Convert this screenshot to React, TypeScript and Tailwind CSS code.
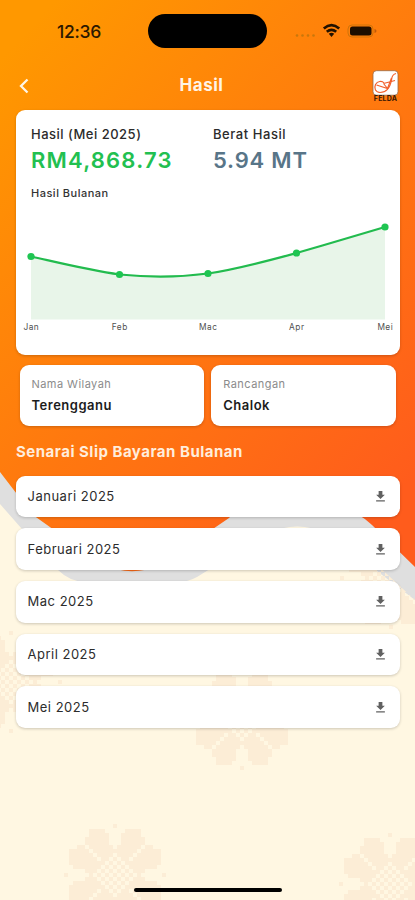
import { MdDownload } from "react-icons/md";

const slips = ["Januari 2025", "Februari 2025", "Mac 2025", "April 2025", "Mei 2025"];

const points = [
  { label: "Jan", x: 31, y: 256.5 },
  { label: "Feb", x: 119.5, y: 274.5 },
  { label: "Mac", x: 208, y: 273.5 },
  { label: "Apr", x: 296.5, y: 253 },
  { label: "Mei", x: 385, y: 227 },
];

const flowers = [
  [11, 682],
  [391, 578],
  [242, 719],
  [115, 875],
  [390, 884],
];

const CURVE =
  "M31 256.5C60 263 90 270.500 119.500 274.500C149 277.500 178.500 277.500 208 273.500C238 269 267 261 296.500 253C326 244.500 355 236 385 227";

// pixel flower on a 4 unit grid, mirrored over both axes
function buildFlower() {
  const cells: string[] = [];
  for (let i = -11; i <= 11; i++) {
    for (let j = -11; j <= 11; j++) {
      const m = Math.max(Math.abs(i), Math.abs(j));
      const n = Math.min(Math.abs(i), Math.abs(j));
      const petal = Math.hypot(m * 4 - 35, n * 4 - 17) < 11.5;
      const inner = m < 8 && m + n >= 6 && m - n >= 1 && n >= 1;
      const center = m + n < 8 && m < 7 && (i + j) % 2 === 0;
      if (petal || inner || center) {
        cells.push(`M${i * 4 - 2} ${j * 4 - 2}h4v4h-4z`);
      }
    }
  }
  for (const [x, y] of [[0, -49], [0, 49], [-49, 0], [49, 0]]) {
    cells.push(`M${x - 2} ${y - 2}h4v4h-4z`);
  }
  return cells.join("");
}

const FLOWER = buildFlower();

function Background() {
  return (
    <svg className="absolute inset-0 h-full w-full" viewBox="0 0 415 900">
      <defs>
        <linearGradient id="sky" gradientUnits="userSpaceOnUse" x1="0" y1="60" x2="430" y2="460">
          <stop offset="0" stopColor="#ff9800" />
          <stop offset="1" stopColor="#ff5c1c" />
        </linearGradient>
      </defs>
      <rect width="415" height="900" fill="#fff7e2" />
      <path d="M0 470V504L58 570Q70 582 86 582H178Q188 582 197 577L268 533Q297 520 327 533L415 600V460Z" fill="#dfdfdf" />
      {flowers.map(([x, y]) => (
        <path key={`${x}-${y}`} d={FLOWER} transform={`translate(${x} ${y})`} fill="#fcedd6" shapeRendering="crispEdges" />
      ))}
      {/* right hand band covers the flower behind it */}
      <path d="M363 518V552L415 600V520Z" fill="#dfdfdf" />
      <path d="M0 0H415V567L372 525Q355 509 335 507H252Q238 508 229 518L160 565Q131 578 102 564L33 515L0 472Z" fill="url(#sky)" />
    </svg>
  );
}

function StatusBar() {
  return (
    <div className="flex h-[62px] items-center">
      <div className="w-[148px] pt-px pl-[57px] text-[17.5px] leading-none font-medium tracking-[-0.3px] text-[#2b1800]">12:36</div>
      <div className="h-[34px] w-[119px] rounded-full bg-black" />
      <svg className="ml-[26px]" width="86" height="20" viewBox="0 0 86 20">
        <g fill="#c8770c">
          <circle cx="4" cy="14.500" r="1.300" />
          <circle cx="9.500" cy="14.500" r="1.300" />
          <circle cx="15" cy="14.500" r="1.300" />
          <circle cx="20.500" cy="14.500" r="1.300" />
        </g>
        <g fill="none" stroke="#221200" strokeWidth="2.600">
          <path d="M30.800 7.500Q38.500 0.800 46.200 7.500" />
          <path d="M33.800 10.800Q38.500 6.800 43.200 10.800" />
        </g>
        <path d="M35.800 12.800Q38.500 10.800 41.200 12.800L38.500 16Z" fill="#221200" />
        <rect x="55" y="4" width="25" height="12" rx="4" fill="none" stroke="#cf7408" />
        <rect x="57" y="5.500" width="21.500" height="9" rx="2.500" fill="#1c0e00" />
        <path d="M81.500 8v4q2-.5 2-2t-2-2" fill="#bf5a08" />
      </svg>
    </div>
  );
}

function Logo() {
  return (
    <div className="flex w-[27px] flex-col items-center">
      <svg width="27" height="26" viewBox="0 0 27 26">
        <rect x="1" y="0.700" width="25" height="24.500" rx="3.500" fill="#fff" stroke="#9b6a48" strokeWidth="0.800" />
        <g fill="none" stroke="#f2602c" strokeWidth="1.200">
          <path d="M24 3.500C20 4.500 20 7 19.500 10C18 18 14 22.500 8 22.500C3 22 2 18 3.500 14.500C5.500 11 10 10.500 12 13" />
          <path d="M4.500 15L15.500 18.500L19.500 8M11.500 13.500L23 10.500M11.500 13.500L15.500 18.500" />
        </g>
      </svg>
      <span className="text-[7px] leading-[6px] font-bold tracking-[0.2px] text-[#3a1804]">FELDA</span>
    </div>
  );
}

function Chart() {
  return (
    <svg className="block" width="384" height="150" viewBox="16 205 384 150">
      <path d={`${CURVE}V319.500H31Z`} fill="#e8f5e9" />
      <path d={CURVE} fill="none" stroke="#22bb4e" strokeWidth="2.200" />
      {points.map((p) => (
        <g key={p.label}>
          <circle cx={p.x} cy={p.y} r="3.600" fill="#1fc552" />
          <text x={p.x + 0.3} y="330" textAnchor="middle" fontSize="8.300" letterSpacing="0.5" fill="#505050">
            {p.label}
          </text>
        </g>
      ))}
    </svg>
  );
}

function InfoCard({ label, value }: { label: string; value: string }) {
  return (
    <div className="h-[61.5px] flex-1 rounded-[9px] bg-white px-3 pt-3 shadow-[0_1px_3px_rgba(0,0,0,0.2)]">
      <div className="text-[11px] leading-[14px] tracking-[0.45px] text-[#8b8b8b]">{label}</div>
      <div className="mt-[7px] text-[13px] leading-[14px] font-semibold tracking-[0.5px] text-[#1c1c1c]">{value}</div>
    </div>
  );
}

export default function App() {
  return (
    <div className="relative h-[900px] w-[415px] overflow-hidden font-['Inter',sans-serif]">
      <Background />
      <div className="relative flex h-full flex-col">
        <StatusBar />

        {/* Header */}
        <div className="flex h-[48px] items-center justify-between pr-4 pl-[18px]">
          <svg width="12" height="16" viewBox="0 0 12 16" fill="none" stroke="#fff6e8" strokeWidth="2.300">
            <path d="M9.500 1.500L3 8L9.500 14.500" />
          </svg>
          <h1 className="pl-px text-[17px] font-bold tracking-[0.5px] text-[#fff4e6]">Hasil</h1>
          <Logo />
        </div>

        {/* Yield summary */}
        <div className="mr-[15px] ml-4 h-[245px] rounded-[9px] bg-white shadow-[0_1px_3px_rgba(0,0,0,0.2)]">
          <div className="flex h-[95px] pt-4 pl-[15px]">
            <div className="w-[182px]">
              <div className="text-[13px] leading-4 font-medium tracking-[0.5px] text-[#2b2b2b]">Hasil (Mei 2025)</div>
              <div className="pt-px text-[22px] leading-[35px] font-semibold tracking-[1.2px] text-[#22c050]">RM4,868.73</div>
              <div className="mt-px text-[11px] leading-[28px] font-medium tracking-[0.5px] text-[#333]">Hasil Bulanan</div>
            </div>
            <div>
              <div className="text-[13px] leading-4 font-medium tracking-[0.55px] text-[#2b2b2b]">Berat Hasil</div>
              <div className="pt-px text-[22px] leading-[35px] font-semibold tracking-[0.8px] text-[#587588]">5.94 MT</div>
            </div>
          </div>
          <Chart />
        </div>

        <div className="mr-[19px] ml-[19.5px] mt-[9.5px] flex gap-[7px]">
          <InfoCard label="Nama Wilayah" value="Terengganu" />
          <InfoCard label="Rancangan" value="Chalok" />
        </div>

        <h2 className="mt-4 pl-4 text-[15px] leading-5 font-bold tracking-[0.5px] text-[#ffeddc]">
          Senarai Slip Bayaran Bulanan
        </h2>

        {/* Payment slips */}
        <div className="mt-[13.5px] mr-[15px] ml-4 flex flex-col gap-[11px]">
          {slips.map((slip) => (
            <div
              key={slip}
              className="flex h-[41.7px] items-center justify-between rounded-[9px] bg-white pr-3 pl-[11.5px] shadow-[0_1px_3px_rgba(0,0,0,0.2)]"
            >
              <span className="pt-px text-[13px] tracking-[0.5px] text-[#2c2c2c]">{slip}</span>
              <MdDownload className="text-[#616161]" size={15} />
            </div>
          ))}
        </div>
      </div>
      <div className="absolute bottom-2 left-[134px] h-1 w-[148px] rounded-full bg-black" />
    </div>
  );
}
